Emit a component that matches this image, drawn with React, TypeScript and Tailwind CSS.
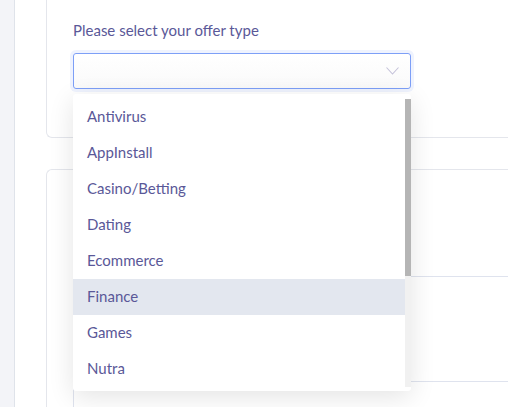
import React from "react"

const offerTypes = ["Antivirus", "AppInstall", "Casino/Betting", "Dating", "Ecommerce", "Finance", "Games", "Nutra"]

export default function App() {
  return (
    <div className="flex h-[407px] w-[508px] overflow-hidden bg-white font-['Lato','Open_Sans',sans-serif] text-[15px] text-[#5a5898]">
      <div className="w-[15px] shrink-0 border-r border-[#dfe3ea] bg-[#f3f4f8]" />
      <div className="flex min-w-0 flex-1 flex-col pl-[31px]">
        <div className="relative z-10 h-[138px] shrink-0 rounded-bl-md border-b border-l border-[#e4e6ec] pl-[26px] pt-[20px]">
          <div className="mb-[13px] leading-5">Please select your offer type</div>
          <div className="relative w-[338px]">
            <div className="flex h-[36px] items-center justify-end rounded-[3px] border border-[#7d9ff7] bg-gradient-to-b from-white to-[#fafafa] pr-[11px] shadow-[0_0_0_3px_rgba(125,159,247,0.12)]">
              <svg width="13" height="8" viewBox="0 0 13 8" fill="none">
                <polyline points="0.5,0.5 6.5,7 12.5,0.5" stroke="#c5c2da" strokeWidth="1.1" />
              </svg>
            </div>
            <div className="absolute left-0 top-[41px] w-[338px] rounded-[3px] bg-white pb-[4px] pt-[5px] shadow-[0_6px_26px_rgba(0,0,0,0.11)]">
              <div className="flex h-[288px]">
                <ul className="flex-1">
                  {offerTypes.map((type) => (
                    <li
                      key={type}
                      className={
                        type === "Finance"
                          ? "flex h-[36px] items-center bg-[#e3e7ef] pb-[2px] pl-[14px]"
                          : "flex h-[36px] items-center pb-[2px] pl-[14px]"
                      }
                    >
                      {type}
                    </li>
                  ))}
                </ul>
                <div className="w-[6px] bg-[#f1f1f1]">
                  <div className="h-[177px] bg-[#b5b5b5]" />
                </div>
              </div>
            </div>
          </div>
        </div>
        <div className="mt-[31px] flex-1 rounded-tl-md border-l border-t border-[#e4e6ec] pl-[26px]">
          <div className="h-[106px]" />
          <div className="h-[105px] border-t border-[#dfe3ee]" />
          <div className="h-[40px] border-l border-t border-[#dfe3ee]" />
        </div>
      </div>
    </div>
  )
}
